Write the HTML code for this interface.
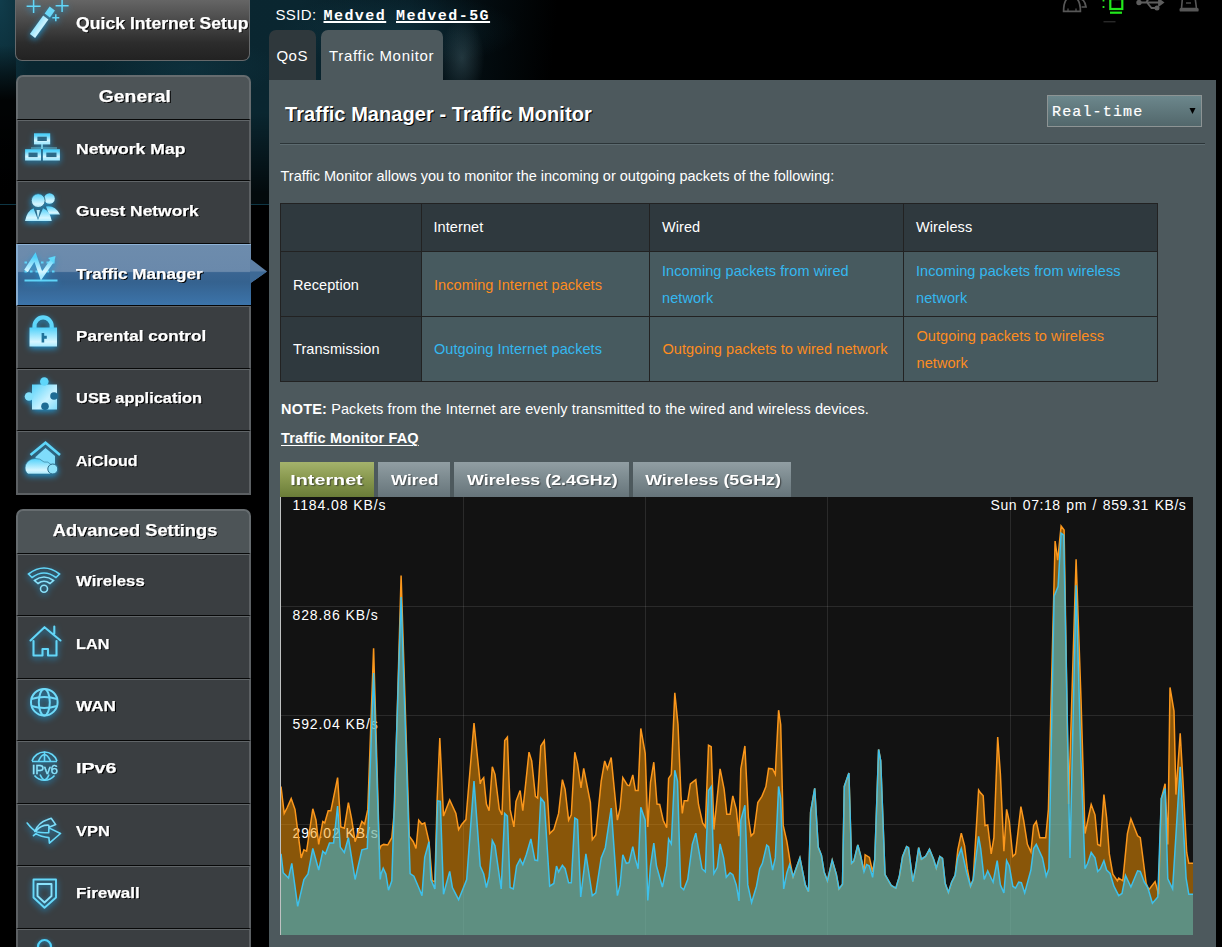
<!DOCTYPE html>
<html><head><meta charset="utf-8"><style>
*{box-sizing:border-box;margin:0;padding:0}
html,body{width:1222px;height:947px;overflow:hidden;background:#000}
body{position:relative;font-family:"Liberation Sans",sans-serif;color:#fff}
.a{position:absolute}
.t{position:absolute;line-height:1;white-space:nowrap}
#bg{left:0;top:0;width:1222px;height:204px;
 background:
  radial-gradient(ellipse 110px 40px at 190px 68px, rgba(24,78,96,.25), rgba(0,0,0,0) 80%),
  radial-gradient(ellipse 28px 50px at 462px 58px, rgba(70,100,110,.45), rgba(0,0,0,0) 80%),
  radial-gradient(ellipse 160px 50px at 400px 30px, rgba(26,80,98,.3), rgba(0,0,0,0) 75%),
  radial-gradient(ellipse 40px 120px at 0px 0px, rgba(18,66,82,.8), rgba(0,0,0,0) 90%),
  linear-gradient(180deg, rgba(0,0,0,0) 0%, rgba(0,0,0,0) 55%, rgba(0,0,0,.75) 95%),
  linear-gradient(95deg,#0a2731 0%,#0a2630 24%,#071d26 33%,#030c10 39%,#000 45%);}
.sb{position:absolute;left:16px;width:235px;background:#3a3e41;border-left:2px solid #5c6063;border-right:2px solid #5c6063;border-top:1px solid #606568;border-bottom:1px solid #070808}
.sbt{position:absolute;left:76px;font-weight:700;font-size:15px;transform-origin:0 0;letter-spacing:0px;text-shadow:1px 1px 0 #000;white-space:nowrap;line-height:1;-webkit-text-stroke:0.25px #fff}
.hdr{position:absolute;left:16px;width:235px;background:#4d5457;border:2px solid #666c6f;border-bottom:1px solid #070808;border-radius:7px 7px 0 0}
.hdrt{position:absolute;left:18px;width:234px;text-align:center;font-weight:700;font-size:16px;letter-spacing:0.2px;text-shadow:1px 1px 0 #000;line-height:1;white-space:nowrap;-webkit-text-stroke:0.25px #fff}
.hdrt span{display:inline-block}
.ico{position:absolute;left:15px;width:60px;height:60px;overflow:visible}
.ico .g{filter:drop-shadow(0px 2.5px 3.2px rgba(30,150,210,.95))}
</style></head><body>
<div id="bg" class="a"></div>
<div class="a" style="left:0;top:0;width:16px;height:204px;background:linear-gradient(180deg,rgba(0,0,0,0) 0px,rgba(0,0,0,0) 45px,rgba(0,0,0,.92) 100px,#000 204px)"></div>
<div class="a" style="left:0;top:204px;width:16px;height:1px;background:#0e3644"></div>
<div class="a" style="left:250px;top:204px;width:19px;height:1px;background:#0e3644"></div>
<div class="a" style="left:15px;top:-8px;width:235px;height:69px;border:1px solid #66696b;border-top:none;border-radius:0 0 7px 7px;background:linear-gradient(#707070 0%,#555 30%,#2c2c2c 75%,#222 100%)"></div>
<div class="sbt" style="top:15.96px;font-size:16px;transform:scaleX(1.102)">Quick Internet Setup</div>
<svg width="0" height="0" style="position:absolute"><defs>
<linearGradient id="ig" x1="0" y1="0" x2="0" y2="1"><stop offset="0" stop-color="#4fd0fa"/><stop offset="0.75" stop-color="#d6f6ff"/><stop offset="1" stop-color="#a8eaff"/></linearGradient>
<linearGradient id="ig2" x1="0" y1="0" x2="1" y2="1"><stop offset="0" stop-color="#55d2fa"/><stop offset="0.6" stop-color="#c9f2ff"/><stop offset="1" stop-color="#7fdcfb"/></linearGradient>
</defs></svg>
<svg class="ico" style="top:0px" width="60" height="60" viewBox="0 0 60 60"><g class="g">
<path d="M18.6 -0.5 v13.5 M11.6 6.3 h14 M47.1 -0.5 v12.5 M40.6 5.7 h13 M40.8 14.2 v7 M37.3 17.7 h7" stroke="#62d6f8" stroke-width="1.5" fill="none"/>
<path d="M17.5 36 L30.8 17.5" stroke="url(#ig2)" stroke-width="6.5" fill="none"/>
<path d="M32.3 15.5 L37.3 8.5" stroke="#6bd8f8" stroke-width="6.5" fill="none"/>
</g></svg>
<div class="hdr" style="top:75px;height:45px"></div>
<div class="hdrt" style="top:89.26px;letter-spacing:0"><span style="transform:scaleX(1.2106363636363637)">General</span></div>
<div class="sb" style="top:120px;height:61px"></div>
<svg class="ico" style="top:120px" width="60" height="60" viewBox="0 0 60 60"><g class="g"><g fill="none" stroke="url(#ig)" stroke-width="3.4">
<rect x="20.7" y="15" width="12.8" height="7.7"/>
<rect x="11.8" y="30.9" width="12.5" height="7.9"/>
<rect x="29.6" y="30.9" width="13.6" height="7.9"/></g>
<path d="M27 24 v5" stroke="#8fe4fb" stroke-width="1.5"/><path d="M16 28 h26" stroke="#6fcfe8" stroke-width="1.2" opacity=".7"/></g></svg>
<div class="sbt" style="top:140.7px;transform:scaleX(1.172)">Network Map</div>
<div class="sb" style="top:181px;height:63px"></div>
<svg class="ico" style="top:181px" width="60" height="60" viewBox="0 0 60 60"><g class="g"><circle cx="34.5" cy="17.5" r="5.3" fill="url(#ig)"/>
<path d="M31 25.5 Q40 24 45 33.5 L34 33.5 Z" fill="url(#ig)"/>
<circle cx="23.2" cy="19.6" r="6.9" fill="url(#ig)" stroke="#2b5f78" stroke-width="0.8"/>
<path d="M10 40 Q12 30 18.5 27.3 L23 39 L28 27.3 Q35 30 36.8 40 Z" fill="url(#ig)"/>
<path d="M21.5 29 L23 38 L25 29 Z" fill="#bdeefc"/></g></svg>
<div class="sbt" style="top:203.1px;transform:scaleX(1.159)">Guest Network</div>
<div class="a" style="left:16px;top:244px;width:235px;height:62px;border-top:1px solid #8fb3d6;border-left:2px solid #86acd0;border-bottom:1px solid #050505;background:linear-gradient(#6d8cad 0%,#6a89ab 44%,#3a6592 46%,#35628f 62%,#3c74aa 100%)"></div>
<svg class="a" style="left:250px;top:244px" width="20" height="62" viewBox="0 0 20 62"><path d="M0 14.5 L17 27.5 L0 39.5 Z" fill="#5e80a5"/><path d="M0 27.5 L17 27.5 L0 39.5 Z" fill="#3d6995"/></svg>
<svg class="ico" style="top:244px" width="60" height="60" viewBox="0 0 60 60"><g class="g"><path d="M9.5 18.5 h33 M9.5 27.5 h33" stroke="#5fd4f8" stroke-width="2.2" stroke-dasharray="2.5 3"/>
<path d="M9.5 36.5 h33" stroke="#5fd4f8" stroke-width="2.2"/>
<path d="M11 27 L20 13 L26.5 32 L38 15.5" stroke="url(#ig)" stroke-width="4.2" fill="none"/>
<path d="M33 14 L40.5 12 L39 19.5 Z" fill="#5fd8fa"/></g></svg>
<div class="sbt" style="top:265.5px;transform:scaleX(1.143)">Traffic Manager</div>
<div class="sb" style="top:306px;height:63px"></div>
<svg class="ico" style="top:306px" width="60" height="60" viewBox="0 0 60 60"><g class="g"><path d="M19.5 22 V20 A8.6 8.6 0 0 1 36.7 20 V22" stroke="#5fd6fa" stroke-width="4.2" fill="none"/>
<rect x="14.5" y="21.5" width="27.5" height="19" fill="url(#ig)"/>
<path d="M26.6 27 h2.6 v2.8 h2.6 v3 h-2.6 v3.6 h-2.6 z" fill="#1f7199"/></g></svg>
<div class="sbt" style="top:327.9px;transform:scaleX(1.14)">Parental control</div>
<div class="sb" style="top:369px;height:62px"></div>
<svg class="ico" style="top:369px" width="60" height="60" viewBox="0 0 60 60"><g class="g"><path d="M17 15.5 H42 V40.5 H17 Z" fill="url(#ig2)"/>
<circle cx="29.3" cy="12.5" r="4.3" fill="#5fd6fa"/>
<circle cx="14" cy="27.5" r="4.3" fill="#83e0fb"/>
<circle cx="39" cy="27" r="3.8" fill="#1d6b94"/>
<circle cx="30" cy="37.2" r="3.8" fill="#1d6b94"/></g></svg>
<div class="sbt" style="top:390.3px;transform:scaleX(1.097)">USB application</div>
<div class="sb" style="top:431px;height:63px"></div>
<svg class="ico" style="top:431px" width="60" height="60" viewBox="0 0 60 60"><g class="g"><path d="M15.5 24 L30.5 11.8 L45 24" stroke="#5fd6fa" stroke-width="2.6" fill="none"/>
<path d="M20.5 26 L30.5 17 L40 25 V33 H20.5 Z" fill="#7fdcfb"/>
<path d="M13 43 Q9 40 10.5 34 Q13 28 20 27.5 Q25 27 29 31 Q33 30 36 33.5 L37 43 Z" fill="url(#ig)" stroke="#2d6e8c" stroke-width=".6"/>
<circle cx="37.8" cy="38" r="5" fill="#8ee2fb" stroke="#2b6a88" stroke-width="1"/></g></svg>
<div class="sbt" style="top:452.7px;transform:scaleX(1.071)">AiCloud</div>
<div class="a" style="left:16px;top:493px;width:235px;height:2px;background:#5c6063"></div>
<div class="hdr" style="top:509px;height:45px"></div>
<div class="hdrt" style="top:523.16px;letter-spacing:0"><span style="transform:scaleX(1.142688679245283)">Advanced Settings</span></div>
<div class="sb" style="top:554px;height:62px"></div>
<svg class="ico" style="top:554px" width="60" height="60" viewBox="0 0 60 60"><g class="g"><g fill="none" stroke="#63d6f8" stroke-width="1.6">
<path d="M13.5 20 Q29 8 44.5 20 L41 23.5 Q29 14.5 17 23.5 Z"/>
<path d="M19.5 26.5 Q29 19.5 38.5 26.5 L35 29.5 Q29 25 23 29.5 Z" stroke="#8ae2fb"/>
<circle cx="29" cy="34.8" r="3.5" stroke="#8ae2fb"/></g></g></svg>
<div class="sbt" style="top:573.4px;transform:scaleX(1.116)">Wireless</div>
<div class="sb" style="top:616px;height:63px"></div>
<svg class="ico" style="top:616px" width="60" height="60" viewBox="0 0 60 60"><g class="g"><path d="M15.5 24.5 L29.5 11.2 L45.5 24.5 M18.5 25 V39.5 H27.5 V33 H33 V39.5 H41.5 V25 M39.3 17.5 V10.5" fill="none" stroke="#63d6f8" stroke-width="2.1" stroke-linejoin="round" stroke-linecap="round"/></g></svg>
<div class="sbt" style="top:635.75px;transform:scaleX(1.084)">LAN</div>
<div class="sb" style="top:679px;height:62px"></div>
<svg class="ico" style="top:679px" width="60" height="60" viewBox="0 0 60 60"><g class="g"><g fill="none" stroke="#6fdaf9" stroke-width="2"><circle cx="29.3" cy="23.2" r="13.3"/>
<ellipse cx="29.3" cy="23.2" rx="5.5" ry="13.3"/><path d="M16.5 20 Q29.3 16 42 20 M16.5 27 Q29.3 31 42 27"/></g></g></svg>
<div class="sbt" style="top:698.1px;transform:scaleX(1.143)">WAN</div>
<div class="sb" style="top:741px;height:63px"></div>
<svg class="ico" style="top:741px" width="60" height="60" viewBox="0 0 60 60"><g class="g"><g fill="none" stroke="#66d8f9" stroke-width="1.6"><path d="M17 20 A13.2 13.2 0 0 1 42 20"/><path d="M19.5 34.5 A13 13 0 0 0 39.5 34.5"/>
<path d="M23.5 20 Q29.5 7 35.5 20 M17 20.5 H42 M29.5 10.5 V20"/><path d="M25 33.5 Q27 38 29.5 39 M34 33.5 Q32.5 38 29.5 39"/></g>
<text x="29.7" y="32.8" text-anchor="middle" font-family="Liberation Sans" font-size="13.5" letter-spacing="-0.3" fill="#8be3fb" stroke="#8be3fb" stroke-width="0.3">IPv6</text></g></svg>
<div class="sbt" style="top:760.45px;transform:scaleX(1.313)">IPv6</div>
<div class="sb" style="top:804px;height:62px"></div>
<svg class="ico" style="top:804px" width="60" height="60" viewBox="0 0 60 60"><g class="g"><g fill="none" stroke="#66d8f9" stroke-width="1.6" stroke-linejoin="round" stroke-linecap="round">
<path d="M12.2 19 Q17 25.5 22 28 Q27 29 33.7 28.6 L33.9 23.9 L45.5 29.5 L34.4 39.1 L33.9 33.6 Q26 32.8 21 29.6 L18.5 31.7"/>
<path d="M19.8 27.5 Q23.5 18.5 32.2 15.8 L36.2 14.3 L40.7 20.6 L34 23.2 L33.7 21.2 Q26 20.8 21.5 26.5" stroke="#7fdefa"/></g></g></svg>
<div class="sbt" style="top:822.8px;transform:scaleX(1.094)">VPN</div>
<div class="sb" style="top:866px;height:63px"></div>
<svg class="ico" style="top:866px" width="60" height="60" viewBox="0 0 60 60"><g class="g"><g fill="none" stroke-width="1.9" stroke-linejoin="round"><path d="M18.5 13.5 H41 V31.5 L29.5 41.8 L18.5 31.5 Z" stroke="#66d8f9"/>
<path d="M22.5 18 H36.5 V30 L29.5 36.5 L22.5 30 Z" stroke="#8ae2fb"/></g></g></svg>
<div class="sbt" style="top:885.15px;transform:scaleX(1.141)">Firewall</div>
<div class="sb" style="top:929px;height:62px"></div>
<div class="sbt" style="top:947.5px;transform:scaleX(1.12)"></div>
<svg class="a" style="left:15px;top:928px" width="60" height="20"><circle cx="29.5" cy="18.5" r="6.5" fill="none" stroke="#4fd0f8" stroke-width="2.2" style="filter:drop-shadow(0 1px 2px rgba(30,150,210,.9))"/></svg>
<svg class="a" style="left:1055px;top:0" width="160" height="24" viewBox="0 0 160 24">
<g fill="none" stroke="#575757" stroke-width="1.7">
<path d="M8.6 11.3 Q8.6 -3 17 -3 Q25.4 -3 25.4 11.3 Z"/><path d="M23.5 -1 Q29.5 -2 31 7 L26.5 7"/>
<path d="M13 11 v-2.5 M21 11 v-2.5" stroke-width="1.2"/>
</g>
<path d="M48.5 -0.5 v2 M48.5 6 v2" stroke="#26e01f" stroke-width="1.8"/>
<rect x="55.3" y="-1" width="12" height="10" fill="none" stroke="#22e81c" stroke-width="2.2"/>
<path d="M55 12.7 h12" stroke="#22e81c" stroke-width="2.2"/>
<path d="M48.5 21.8 h12" stroke="#3a3a3a" stroke-width="1"/>
<g fill="none" stroke="#5e5e5e" stroke-width="1.8"><path d="M84 2.5 H104 M91 2.5 L95 -3 M92 2.5 L96.5 8 H101"/><circle cx="84" cy="2.5" r="1.8" fill="#5e5e5e"/><circle cx="102" cy="8" r="1.6" fill="#5e5e5e"/><path d="M104 -0.5 L108 2.5 L104 5.5 Z" fill="#5e5e5e"/></g>
<g><path d="M127.5 -3 H140 L141.5 8.5 H126.5 Z" fill="none" stroke="#575757" stroke-width="1.6"/><rect x="124.6" y="8" width="19" height="3.6" rx="1.2" fill="#575757"/><path d="M131 3 h5" stroke="#575757" stroke-width="1.3"/></g>
</svg>
<div class="t" style="left:275.5px;top:6.9px;font-size:15px;letter-spacing:0.35px;color:#fff">SSID:</div>
<div class="t" style="left:323.5px;top:9.1px;font-size:15px;font-family:'Liberation Mono',monospace;font-weight:700;letter-spacing:1.45px;text-decoration:underline;text-decoration-thickness:1.6px;text-underline-offset:1px">Medved</div>
<div class="t" style="left:396px;top:9.1px;font-size:15px;font-family:'Liberation Mono',monospace;font-weight:700;letter-spacing:1.45px;text-decoration:underline;text-decoration-thickness:1.6px;text-underline-offset:1px">Medved-5G</div>
<div class="a" style="left:269px;top:30px;width:47px;height:50px;background:#2f383c;border-radius:7px 7px 0 0"></div>
<div class="a" style="left:321px;top:30px;width:122px;height:52px;background:#4d595d;border-radius:7px 7px 0 0"></div>
<div class="t" style="left:276.5px;top:47.8px;font-size:15px;letter-spacing:0.45px">QoS</div>
<div class="t" style="left:329px;top:47.8px;font-size:15px;letter-spacing:0.68px">Traffic Monitor</div>
<div class="a" style="left:269px;top:80px;width:947px;height:867px;background:#4d595d"></div>
<div class="t" style="left:285px;top:104.17px;font-size:20px;font-weight:700;letter-spacing:0.07px;text-shadow:1px 1px 0 #000">Traffic Manager - Traffic Monitor</div>
<div class="a" style="left:1047px;top:95px;width:155px;height:32px;border:1px solid #8d9494;background:linear-gradient(#6c878c,#52676b)"></div>
<div class="t" style="left:1052px;top:105.3px;font-size:15px;font-family:'Liberation Mono',monospace;letter-spacing:1.15px;-webkit-text-stroke:0.2px #fff">Real-time</div>
<svg class="a" style="left:1189px;top:107px" width="8" height="8"><path d="M0.5 1 H6.5 L3.5 7 Z" fill="#000"/></svg>
<div class="a" style="left:280px;top:143px;width:925px;height:1px;background:#2c3538"></div>
<div class="a" style="left:280px;top:144px;width:925px;height:1px;background:#5d6b70"></div>
<div class="t" style="left:280.5px;top:168.53px;font-size:14.5px">Traffic Monitor allows you to monitor the incoming or outgoing packets of the following:</div>
<div class="a" style="left:280px;top:203px;width:878px;height:179px;background:#222"></div>
<div class="a" style="left:281px;top:204px;width:140px;height:47px;background:#2f393e"></div>
<div class="a" style="left:422px;top:204px;width:227px;height:47px;background:#2f393e"></div>
<div class="a" style="left:650px;top:204px;width:253px;height:47px;background:#2f393e"></div>
<div class="a" style="left:904px;top:204px;width:253px;height:47px;background:#2f393e"></div>
<div class="a" style="left:281px;top:252px;width:140px;height:64px;background:#2f393e"></div>
<div class="a" style="left:422px;top:252px;width:227px;height:64px;background:#475a5f"></div>
<div class="a" style="left:650px;top:252px;width:253px;height:64px;background:#475a5f"></div>
<div class="a" style="left:904px;top:252px;width:253px;height:64px;background:#475a5f"></div>
<div class="a" style="left:281px;top:317px;width:140px;height:64px;background:#2f393e"></div>
<div class="a" style="left:422px;top:317px;width:227px;height:64px;background:#475a5f"></div>
<div class="a" style="left:650px;top:317px;width:253px;height:64px;background:#475a5f"></div>
<div class="a" style="left:904px;top:317px;width:253px;height:64px;background:#475a5f"></div>
<div class="t" style="left:433.5px;top:220.13px;font-size:14.5px;letter-spacing:0.08px;color:#fff">Internet</div>
<div class="t" style="left:662px;top:220.13px;font-size:14.5px;letter-spacing:0.08px;color:#fff">Wired</div>
<div class="t" style="left:916px;top:220.13px;font-size:14.5px;letter-spacing:0.08px;color:#fff">Wireless</div>
<div class="t" style="left:293px;top:277.63px;font-size:14.5px;letter-spacing:0.08px;color:#fff">Reception</div>
<div class="t" style="left:293px;top:342.13px;font-size:14.5px;letter-spacing:0.08px;color:#fff">Transmission</div>
<div class="t" style="left:434px;top:277.63px;font-size:14.5px;letter-spacing:0.08px;color:#fe8c1e">Incoming Internet packets</div>
<div class="t" style="left:662px;top:264.13px;font-size:14.5px;letter-spacing:0.08px;color:#34b8f0">Incoming packets from wired</div>
<div class="t" style="left:662px;top:291.13px;font-size:14.5px;letter-spacing:0.08px;color:#34b8f0">network</div>
<div class="t" style="left:916px;top:264.13px;font-size:14.5px;letter-spacing:0.08px;color:#34b8f0">Incoming packets from wireless</div>
<div class="t" style="left:916px;top:291.13px;font-size:14.5px;letter-spacing:0.08px;color:#34b8f0">network</div>
<div class="t" style="left:434px;top:342.13px;font-size:14.5px;letter-spacing:0.08px;color:#34b8f0">Outgoing Internet packets</div>
<div class="t" style="left:662.5px;top:342.13px;font-size:14.5px;letter-spacing:0.08px;color:#fe8c1e">Outgoing packets to wired network</div>
<div class="t" style="left:916.5px;top:329.13px;font-size:14.5px;letter-spacing:0.08px;color:#fe8c1e">Outgoing packets to wireless</div>
<div class="t" style="left:916.5px;top:356.13px;font-size:14.5px;letter-spacing:0.08px;color:#fe8c1e">network</div>
<div class="t" style="left:281px;top:402.13px;font-size:14.5px"><b style="letter-spacing:0.2px">NOTE:</b> <span style="letter-spacing:0.1px">Packets from the Internet are evenly transmitted to the wired and wireless devices.</span></div>
<div class="t" style="left:281px;top:431.13px;font-size:14.5px;font-weight:700;letter-spacing:0.17px;text-decoration:underline;text-underline-offset:1.5px">Traffic Monitor FAQ</div>
<div class="a" style="left:280px;top:462px;width:94px;height:35px;background:linear-gradient(#a4b26c,#8a9a50 45%,#6a7c38)"></div>
<div class="t" style="left:279.5px;width:94px;text-align:center;top:472.1px;font-size:15px;font-weight:700;text-shadow:1px 1px 1px rgba(40,40,40,.6)"><span style="display:inline-block;transform:scaleX(1.316)">Internet</span></div>
<div class="a" style="left:378px;top:462px;width:72px;height:35px;background:linear-gradient(#919ea3,#7b898e 50%,#66747a)"></div>
<div class="t" style="left:378.5px;width:72px;text-align:center;top:472.1px;font-size:15px;font-weight:700;text-shadow:1px 1px 1px rgba(40,40,40,.6)"><span style="display:inline-block;transform:scaleX(1.14)">Wired</span></div>
<div class="a" style="left:454px;top:462px;width:175px;height:35px;background:linear-gradient(#919ea3,#7b898e 50%,#66747a)"></div>
<div class="t" style="left:454.5px;width:175px;text-align:center;top:472.1px;font-size:15px;font-weight:700;text-shadow:1px 1px 1px rgba(40,40,40,.6)"><span style="display:inline-block;transform:scaleX(1.19)">Wireless (2.4GHz)</span></div>
<div class="a" style="left:633px;top:462px;width:158px;height:35px;background:linear-gradient(#919ea3,#7b898e 50%,#66747a)"></div>
<div class="t" style="left:634.5px;width:158px;text-align:center;top:472.1px;font-size:15px;font-weight:700;text-shadow:1px 1px 1px rgba(40,40,40,.6)"><span style="display:inline-block;transform:scaleX(1.19)">Wireless (5GHz)</span></div>
<svg class="a" style="left:281px;top:497px" width="912" height="438" viewBox="0 0 912 438">
<rect x="0" y="0" width="912" height="438" fill="#121212"/>
<path d="M0 109.5 H912" stroke="rgba(255,255,255,0.1)" stroke-width="1"/><path d="M0 218.5 H912" stroke="rgba(255,255,255,0.1)" stroke-width="1"/><path d="M0 327.5 H912" stroke="rgba(255,255,255,0.1)" stroke-width="1"/><path d="M182.5 0 V438" stroke="rgba(255,255,255,0.1)" stroke-width="1"/><path d="M364.5 0 V438" stroke="rgba(255,255,255,0.1)" stroke-width="1"/><path d="M546.5 0 V438" stroke="rgba(255,255,255,0.1)" stroke-width="1"/><path d="M729.5 0 V438" stroke="rgba(255,255,255,0.1)" stroke-width="1"/>
</svg>
<div class="a" style="left:280px;top:497px;width:1px;height:438px;background:#bfc1c1"></div><div class="t" style="left:292.5px;top:498.25px;font-size:14px;letter-spacing:0.9px;color:#fff">1184.08 KB/s</div><div class="t" style="left:292.5px;top:608.25px;font-size:14px;letter-spacing:0.9px;color:#fff">828.86 KB/s</div><div class="t" style="left:292.5px;top:717.25px;font-size:14px;letter-spacing:0.9px;color:#fff">592.04 KB/s</div><div class="t" style="left:292.5px;top:826.25px;font-size:14px;letter-spacing:0.9px;color:#fff">296.02 KB/s</div><div class="t" style="left:990.5px;top:498.25px;font-size:14px;letter-spacing:0.55px;word-spacing:1.3px;color:#fff">Sun 07:18 pm / 859.31 KB/s</div><svg class="a" style="left:281px;top:497px" width="912" height="438" viewBox="0 0 912 438">
<polygon points="0,438 0.0,289.5 3.2,316.4 6.0,311.0 10.2,301.6 14.0,312.4 20.2,360.9 22.9,352.8 25.6,354.2 31.8,311.8 35.0,323.2 37.7,347.4 41.8,324.5 43.7,325.9 47.2,313.7 49.9,313.7 56.6,280.6 59.8,329.9 63.3,331.2 67.4,305.6 70.6,321.8 74.1,344.7 80.9,324.5 83.6,327.2 86.8,312.4 92.6,151.3 98.4,352.8 100.0,348.8 102.7,347.4 106.7,348.0 110.8,340.7 113.5,312.4 120.1,78.5 128.3,339.3 132.3,344.7 135.0,351.5 137.7,323.2 141.0,327.2 143.7,325.9 148.0,344.7 151.2,383.8 153.9,384.6 156.1,303.0 158.8,241.0 162.5,319.1 168.7,303.0 174.9,316.4 177.6,332.6 180.9,327.2 184.9,322.6 193.0,226.1 199.2,286.8 200.0,284.1 202.7,280.6 205.4,307.0 208.1,313.7 211.3,269.8 214.0,277.3 218.3,312.4 221.0,317.8 223.7,243.6 226.4,240.1 229.1,312.4 232.9,329.9 235.0,304.3 239.1,293.5 241.8,313.7 248.0,255.2 250.7,263.9 254.4,299.4 256.6,301.1 259.8,249.0 263.3,243.6 268.7,336.6 272.8,332.6 277.6,316.4 281.4,282.7 284.1,292.2 287.6,323.2 290.3,317.8 293.8,255.2 296.5,266.6 300.0,290.8 302.7,271.4 309.4,305.6 311.3,342.6 314.8,338.0 320.2,284.1 323.7,263.9 326.4,271.9 330.2,260.6 333.7,296.2 336.4,323.2 339.1,311.0 341.8,280.6 346.4,288.1 348.5,288.7 351.8,277.9 354.4,293.5 357.1,293.5 359.8,231.5 364.2,256.3 366.8,329.9 369.5,285.4 372.8,265.2 376.0,307.0 378.7,307.5 382.2,323.2 385.7,330.7 387.6,281.4 390.3,277.3 393.8,195.9 397.0,227.5 400.0,298.9 401.3,316.4 403.2,303.8 406.7,303.8 409.4,286.8 414.8,282.7 417.5,307.5 421.6,325.9 424.3,329.9 427.5,248.2 430.2,249.8 432.9,332.6 439.1,271.9 443.1,292.2 445.8,317.2 449.1,317.2 451.8,298.9 455.3,312.4 458.0,339.3 459.8,271.9 463.9,249.0 467.4,320.5 470.1,338.8 472.8,336.1 476.8,305.6 480.9,299.4 484.9,289.5 487.6,271.4 491.6,271.9 494.3,277.3 497.6,213.2 499.7,227.5 502.2,328.5 505.9,344.7 509.4,366.3 512.1,379.8 518.9,360.9 524.3,387.9 527.5,394.6 529.6,315.1 533.7,291.4 537.2,350.1 540.4,358.2 543.1,374.9 546.4,383.8 551.2,363.1 555.3,377.1 558.0,391.9 561.5,387.3 563.3,289.5 567.9,276.0 570.6,366.3 572.8,364.1 576.8,348.0 579.5,358.2 583.0,374.9 584.1,357.7 588.4,360.4 591.6,374.9 593.8,362.2 597.6,252.5 599.7,263.9 604.0,377.6 610.2,388.4 614.8,391.1 618.3,379.8 621.6,359.5 625.6,349.6 627.5,350.7 631.8,384.6 634.5,371.7 637.7,350.7 640.4,362.2 644.5,359.5 648.5,352.3 652.6,362.2 655.3,371.1 658.8,359.5 661.5,361.4 664.2,386.5 667.4,395.4 670.6,385.2 674.1,378.4 674.1,378.4 676.8,352.8 680.3,336.1 683.6,348.8 686.3,371.7 689.5,389.2 689.5,389.2 692.2,382.5 697.6,293.0 699.7,296.2 700.0,296.2 702.2,298.9 704.0,328.5 706.7,328.0 710.2,356.9 712.9,340.7 716.7,240.1 719.4,277.3 722.9,354.2 725.6,312.4 728.3,324.5 731.8,359.5 734.5,356.9 739.9,309.7 742.6,323.2 746.4,347.4 749.9,355.0 752.6,328.5 755.3,324.5 758.8,340.7 764.7,340.7 767.4,312.4 774.1,44.1 776.7,63.2 780.1,29.1 783.1,33.1 787.6,307.0 795.1,62.2 800.0,201.9 804.0,336.6 810.2,307.5 814.0,317.8 816.7,347.4 819.4,348.8 822.9,297.6 825.6,320.5 828.3,356.9 831.8,377.1 836.4,383.8 837.7,381.1 841.8,383.8 846.4,336.6 849.9,321.8 856.6,338.8 859.3,340.7 865.2,386.5 867.9,392.7 874.1,384.6 877.6,397.3 880.3,301.6 884.1,286.8 886.8,347.4 889.0,190.5 893.0,214.0 894.9,297.6 899.2,236.4 901.9,282.7 905.7,355.5 907.8,366.3 912.0,366.3 912,438" fill="rgba(255,153,0,0.5)"/>
<polygon points="0,438 0.0,356.8 2.2,375.7 7.5,381.1 10.8,366.3 16.7,409.4 22.9,382.5 27.0,377.0 31.8,351.5 37.7,373.0 41.8,354.2 44.5,356.8 48.5,346.1 52.6,346.1 56.6,309.1 59.3,350.1 63.3,355.5 67.4,340.7 74.1,382.5 80.9,352.8 86.3,351.5 92.6,176.0 99.2,382.5 100.0,377.0 102.2,371.1 104.9,377.0 107.5,393.2 110.8,383.8 120.1,100.0 129.1,376.5 132.9,379.2 137.7,390.5 141.0,398.6 143.7,360.4 148.0,344.7 149.9,382.5 153.9,391.9 156.6,303.8 159.3,304.3 162.5,397.3 168.7,374.4 171.4,390.5 177.6,402.7 185.7,382.5 193.0,284.1 199.2,369.0 202.7,377.0 205.4,390.5 208.1,379.8 211.3,343.4 214.0,348.8 220.2,391.9 223.7,316.4 226.4,319.1 229.1,390.5 232.3,391.9 235.6,369.0 239.1,362.2 241.8,367.6 245.3,357.7 249.9,342.0 253.9,363.1 256.6,363.6 259.8,301.1 263.3,305.6 268.7,389.2 272.8,386.5 275.5,369.0 277.6,374.9 281.4,368.4 284.1,371.7 287.6,385.7 290.3,385.7 293.8,321.0 296.5,322.6 299.7,400.0 304.9,356.9 311.3,398.6 314.8,395.9 320.2,360.9 324.3,350.7 330.2,311.0 336.4,398.6 339.1,387.9 341.8,357.7 345.3,366.3 348.0,365.7 351.8,349.6 354.4,362.2 357.1,371.7 359.8,310.2 364.2,323.2 366.8,403.5 369.5,369.0 372.8,346.1 375.5,369.0 381.4,390.0 385.7,369.0 387.6,342.0 390.3,346.9 393.8,273.3 396.5,284.1 399.7,390.0 402.7,392.7 406.7,382.5 411.3,347.4 414.8,336.1 421.0,371.7 424.3,374.9 427.5,293.5 430.2,289.5 432.9,376.5 436.4,370.3 439.1,346.9 442.6,360.9 445.3,380.3 449.1,375.7 451.8,377.6 455.3,387.9 458.0,404.0 459.8,323.2 463.9,308.3 466.8,387.9 470.6,405.4 475.5,389.2 478.7,371.7 481.4,366.3 485.7,348.0 487.6,349.6 491.6,373.0 494.3,360.9 497.6,289.5 499.7,301.6 502.7,391.9 505.9,375.7 508.6,367.6 512.1,379.8 518.9,360.9 524.3,387.9 527.5,394.6 529.6,315.1 533.7,291.4 537.2,350.1 540.4,358.2 543.1,374.9 546.4,383.8 551.2,363.1 555.3,377.1 558.0,391.9 561.5,387.3 563.3,289.5 567.9,276.0 570.6,366.3 572.8,364.1 576.8,348.0 579.5,358.2 583.0,374.9 585.7,367.6 588.4,369.0 591.6,380.3 593.8,362.2 597.6,252.5 599.7,263.9 604.0,377.6 610.2,388.4 614.8,391.1 618.3,379.8 621.6,359.5 625.6,349.6 627.5,350.7 631.8,384.6 634.5,371.7 637.7,350.7 640.4,362.2 644.5,359.5 648.5,352.3 652.6,362.2 655.3,371.1 658.8,359.5 661.5,361.4 664.2,386.5 667.4,395.4 670.6,385.2 674.1,378.4 676.8,360.9 680.3,351.5 685.7,375.7 689.5,389.2 692.2,382.5 697.6,339.3 699.7,351.5 703.2,382.5 706.7,373.8 712.1,385.2 716.2,363.6 719.4,387.9 722.9,395.9 725.6,363.6 728.3,369.0 731.8,389.2 734.5,391.1 737.7,385.2 740.4,385.7 743.7,395.9 749.9,373.0 752.6,351.5 755.3,347.4 761.5,360.9 765.2,379.2 767.9,371.7 773.1,99.3 777.1,89.3 780.1,36.1 782.7,38.1 789.0,360.9 795.1,88.3 800.0,263.9 804.0,371.7 806.7,366.3 810.2,355.5 814.0,360.9 816.7,374.4 819.4,371.7 822.9,363.6 825.6,373.0 829.1,376.5 832.9,389.2 837.7,398.6 841.0,396.5 844.5,378.4 849.9,390.0 856.6,373.8 859.3,374.4 863.3,385.2 866.8,390.5 871.4,406.2 876.8,400.0 880.3,301.6 884.1,291.4 886.8,381.9 891.6,391.9 899.2,269.8 905.1,381.1 907.8,397.3 912.0,397.3 912,438" fill="rgba(52,199,250,0.5)"/>
<polyline points="0.0,289.5 3.2,316.4 6.0,311.0 10.2,301.6 14.0,312.4 20.2,360.9 22.9,352.8 25.6,354.2 31.8,311.8 35.0,323.2 37.7,347.4 41.8,324.5 43.7,325.9 47.2,313.7 49.9,313.7 56.6,280.6 59.8,329.9 63.3,331.2 67.4,305.6 70.6,321.8 74.1,344.7 80.9,324.5 83.6,327.2 86.8,312.4 92.6,151.3 98.4,352.8 100.0,348.8 102.7,347.4 106.7,348.0 110.8,340.7 113.5,312.4 120.1,78.5 128.3,339.3 132.3,344.7 135.0,351.5 137.7,323.2 141.0,327.2 143.7,325.9 148.0,344.7 151.2,383.8 153.9,384.6 156.1,303.0 158.8,241.0 162.5,319.1 168.7,303.0 174.9,316.4 177.6,332.6 180.9,327.2 184.9,322.6 193.0,226.1 199.2,286.8 200.0,284.1 202.7,280.6 205.4,307.0 208.1,313.7 211.3,269.8 214.0,277.3 218.3,312.4 221.0,317.8 223.7,243.6 226.4,240.1 229.1,312.4 232.9,329.9 235.0,304.3 239.1,293.5 241.8,313.7 248.0,255.2 250.7,263.9 254.4,299.4 256.6,301.1 259.8,249.0 263.3,243.6 268.7,336.6 272.8,332.6 277.6,316.4 281.4,282.7 284.1,292.2 287.6,323.2 290.3,317.8 293.8,255.2 296.5,266.6 300.0,290.8 302.7,271.4 309.4,305.6 311.3,342.6 314.8,338.0 320.2,284.1 323.7,263.9 326.4,271.9 330.2,260.6 333.7,296.2 336.4,323.2 339.1,311.0 341.8,280.6 346.4,288.1 348.5,288.7 351.8,277.9 354.4,293.5 357.1,293.5 359.8,231.5 364.2,256.3 366.8,329.9 369.5,285.4 372.8,265.2 376.0,307.0 378.7,307.5 382.2,323.2 385.7,330.7 387.6,281.4 390.3,277.3 393.8,195.9 397.0,227.5 400.0,298.9 401.3,316.4 403.2,303.8 406.7,303.8 409.4,286.8 414.8,282.7 417.5,307.5 421.6,325.9 424.3,329.9 427.5,248.2 430.2,249.8 432.9,332.6 439.1,271.9 443.1,292.2 445.8,317.2 449.1,317.2 451.8,298.9 455.3,312.4 458.0,339.3 459.8,271.9 463.9,249.0 467.4,320.5 470.1,338.8 472.8,336.1 476.8,305.6 480.9,299.4 484.9,289.5 487.6,271.4 491.6,271.9 494.3,277.3 497.6,213.2 499.7,227.5 502.2,328.5 505.9,344.7 509.4,366.3 512.1,379.8 518.9,360.9 524.3,387.9 527.5,394.6 529.6,315.1 533.7,291.4 537.2,350.1 540.4,358.2 543.1,374.9 546.4,383.8 551.2,363.1 555.3,377.1 558.0,391.9 561.5,387.3 563.3,289.5 567.9,276.0 570.6,366.3 572.8,364.1 576.8,348.0 579.5,358.2 583.0,374.9 584.1,357.7 588.4,360.4 591.6,374.9 593.8,362.2 597.6,252.5 599.7,263.9 604.0,377.6 610.2,388.4 614.8,391.1 618.3,379.8 621.6,359.5 625.6,349.6 627.5,350.7 631.8,384.6 634.5,371.7 637.7,350.7 640.4,362.2 644.5,359.5 648.5,352.3 652.6,362.2 655.3,371.1 658.8,359.5 661.5,361.4 664.2,386.5 667.4,395.4 670.6,385.2 674.1,378.4 674.1,378.4 676.8,352.8 680.3,336.1 683.6,348.8 686.3,371.7 689.5,389.2 689.5,389.2 692.2,382.5 697.6,293.0 699.7,296.2 700.0,296.2 702.2,298.9 704.0,328.5 706.7,328.0 710.2,356.9 712.9,340.7 716.7,240.1 719.4,277.3 722.9,354.2 725.6,312.4 728.3,324.5 731.8,359.5 734.5,356.9 739.9,309.7 742.6,323.2 746.4,347.4 749.9,355.0 752.6,328.5 755.3,324.5 758.8,340.7 764.7,340.7 767.4,312.4 774.1,44.1 776.7,63.2 780.1,29.1 783.1,33.1 787.6,307.0 795.1,62.2 800.0,201.9 804.0,336.6 810.2,307.5 814.0,317.8 816.7,347.4 819.4,348.8 822.9,297.6 825.6,320.5 828.3,356.9 831.8,377.1 836.4,383.8 837.7,381.1 841.8,383.8 846.4,336.6 849.9,321.8 856.6,338.8 859.3,340.7 865.2,386.5 867.9,392.7 874.1,384.6 877.6,397.3 880.3,301.6 884.1,286.8 886.8,347.4 889.0,190.5 893.0,214.0 894.9,297.6 899.2,236.4 901.9,282.7 905.7,355.5 907.8,366.3 912.0,366.3" fill="none" stroke="#fb971c" stroke-width="1.5" stroke-linejoin="miter"/>
<polyline points="0.0,356.8 2.2,375.7 7.5,381.1 10.8,366.3 16.7,409.4 22.9,382.5 27.0,377.0 31.8,351.5 37.7,373.0 41.8,354.2 44.5,356.8 48.5,346.1 52.6,346.1 56.6,309.1 59.3,350.1 63.3,355.5 67.4,340.7 74.1,382.5 80.9,352.8 86.3,351.5 92.6,176.0 99.2,382.5 100.0,377.0 102.2,371.1 104.9,377.0 107.5,393.2 110.8,383.8 120.1,100.0 129.1,376.5 132.9,379.2 137.7,390.5 141.0,398.6 143.7,360.4 148.0,344.7 149.9,382.5 153.9,391.9 156.6,303.8 159.3,304.3 162.5,397.3 168.7,374.4 171.4,390.5 177.6,402.7 185.7,382.5 193.0,284.1 199.2,369.0 202.7,377.0 205.4,390.5 208.1,379.8 211.3,343.4 214.0,348.8 220.2,391.9 223.7,316.4 226.4,319.1 229.1,390.5 232.3,391.9 235.6,369.0 239.1,362.2 241.8,367.6 245.3,357.7 249.9,342.0 253.9,363.1 256.6,363.6 259.8,301.1 263.3,305.6 268.7,389.2 272.8,386.5 275.5,369.0 277.6,374.9 281.4,368.4 284.1,371.7 287.6,385.7 290.3,385.7 293.8,321.0 296.5,322.6 299.7,400.0 304.9,356.9 311.3,398.6 314.8,395.9 320.2,360.9 324.3,350.7 330.2,311.0 336.4,398.6 339.1,387.9 341.8,357.7 345.3,366.3 348.0,365.7 351.8,349.6 354.4,362.2 357.1,371.7 359.8,310.2 364.2,323.2 366.8,403.5 369.5,369.0 372.8,346.1 375.5,369.0 381.4,390.0 385.7,369.0 387.6,342.0 390.3,346.9 393.8,273.3 396.5,284.1 399.7,390.0 402.7,392.7 406.7,382.5 411.3,347.4 414.8,336.1 421.0,371.7 424.3,374.9 427.5,293.5 430.2,289.5 432.9,376.5 436.4,370.3 439.1,346.9 442.6,360.9 445.3,380.3 449.1,375.7 451.8,377.6 455.3,387.9 458.0,404.0 459.8,323.2 463.9,308.3 466.8,387.9 470.6,405.4 475.5,389.2 478.7,371.7 481.4,366.3 485.7,348.0 487.6,349.6 491.6,373.0 494.3,360.9 497.6,289.5 499.7,301.6 502.7,391.9 505.9,375.7 508.6,367.6 512.1,379.8 518.9,360.9 524.3,387.9 527.5,394.6 529.6,315.1 533.7,291.4 537.2,350.1 540.4,358.2 543.1,374.9 546.4,383.8 551.2,363.1 555.3,377.1 558.0,391.9 561.5,387.3 563.3,289.5 567.9,276.0 570.6,366.3 572.8,364.1 576.8,348.0 579.5,358.2 583.0,374.9 585.7,367.6 588.4,369.0 591.6,380.3 593.8,362.2 597.6,252.5 599.7,263.9 604.0,377.6 610.2,388.4 614.8,391.1 618.3,379.8 621.6,359.5 625.6,349.6 627.5,350.7 631.8,384.6 634.5,371.7 637.7,350.7 640.4,362.2 644.5,359.5 648.5,352.3 652.6,362.2 655.3,371.1 658.8,359.5 661.5,361.4 664.2,386.5 667.4,395.4 670.6,385.2 674.1,378.4 676.8,360.9 680.3,351.5 685.7,375.7 689.5,389.2 692.2,382.5 697.6,339.3 699.7,351.5 703.2,382.5 706.7,373.8 712.1,385.2 716.2,363.6 719.4,387.9 722.9,395.9 725.6,363.6 728.3,369.0 731.8,389.2 734.5,391.1 737.7,385.2 740.4,385.7 743.7,395.9 749.9,373.0 752.6,351.5 755.3,347.4 761.5,360.9 765.2,379.2 767.9,371.7 773.1,99.3 777.1,89.3 780.1,36.1 782.7,38.1 789.0,360.9 795.1,88.3 800.0,263.9 804.0,371.7 806.7,366.3 810.2,355.5 814.0,360.9 816.7,374.4 819.4,371.7 822.9,363.6 825.6,373.0 829.1,376.5 832.9,389.2 837.7,398.6 841.0,396.5 844.5,378.4 849.9,390.0 856.6,373.8 859.3,374.4 863.3,385.2 866.8,390.5 871.4,406.2 876.8,400.0 880.3,301.6 884.1,291.4 886.8,381.9 891.6,391.9 899.2,269.8 905.1,381.1 907.8,397.3 912.0,397.3" fill="none" stroke="#3ec0ea" stroke-width="1.5"/>
</svg>
</body></html>
